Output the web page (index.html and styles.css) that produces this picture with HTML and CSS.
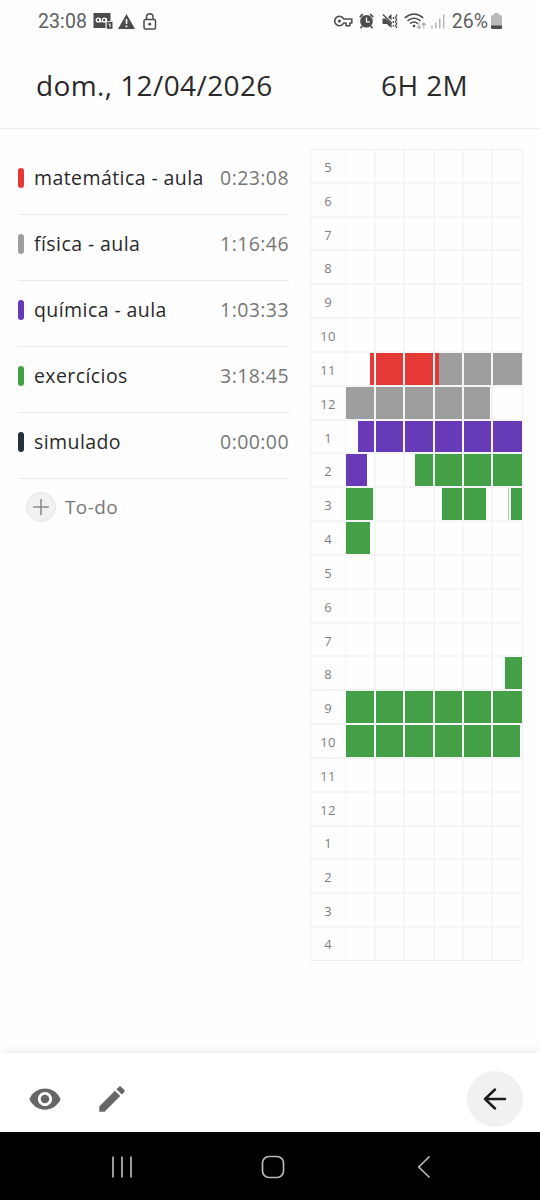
FILE: index.html
```html
<!DOCTYPE html>
<html lang="pt-BR">
<head>
    <meta charset="UTF-8">
    <meta name="viewport" content="width=device-width, initial-scale=1.0">
    <title>Planner</title>
    <link rel="stylesheet" href="styles.css">
</head>
<body>
    <div class="status-bar">
        <div class="status-left">
            <span class="clock">23:08</span>
            <svg class="icon-voicemail" width="20" height="16" viewBox="0 0 20 16">
                <rect x="0.5" y="0" width="17" height="15" fill="#4c4c4c"/>
                <g fill="none" stroke="#fff" stroke-width="1.4">
                    <circle cx="5.2" cy="7" r="1.9"/>
                    <circle cx="11.3" cy="7" r="1.9"/>
                    <path d="M7.1 5V8.5H9.400M13.200 5V8"/>
                </g>
                <path d="M12.500 16V8H20V16Z" fill="#fff"/>
                <rect x="13.700" y="8.800" width="5.800" height="7" fill="#4c4c4c"/>
                <path d="M15.600 11H17V14" fill="none" stroke="#fff"/>
            </svg>
            <svg class="icon-warning" width="17" height="15" viewBox="0 0 17 15">
                <path d="M8.500 0L17 15H0Z" fill="#4c4c4c"/>
                <path d="M8.500 5V10M8.500 11.500V13.300" stroke="#fff" stroke-width="1.700"/>
            </svg>
            <svg class="icon-lock" width="14" height="17" viewBox="0 0 14 17">
                <g fill="none" stroke="#4c4c4c" stroke-width="1.500">
                    <rect x="1" y="6.500" width="11.500" height="9.500" rx="1.500"/>
                    <path d="M3.500 6.500V4a3.250 3.250 0 0 1 6.500 0V6.500"/>
                </g>
                <circle cx="6.750" cy="11.200" r="1.400" fill="#4c4c4c"/>
            </svg>
        </div>
        <div class="status-right">
            <svg class="icon-key" width="19" height="12" viewBox="0 0 19 12">
                <path d="M9.700 4A4.700 4.700 0 1 0 9.700 8H12V10.700H15.800V8H17.800V4Z" fill="none" stroke="#4c4c4c" stroke-width="1.600" stroke-linejoin="round"/>
                <circle cx="5.400" cy="6" r="1.500" fill="#4c4c4c"/>
            </svg>
            <svg class="icon-alarm" width="15" height="16" viewBox="0 0 15 16">
                <circle cx="7.500" cy="8.300" r="6.300" fill="#4c4c4c"/>
                <path d="M0.800 4.200L3.800 1.200M14.200 4.200L11.200 1.200M3.300 13L1.500 15.200M11.700 13L13.500 15.200" stroke="#4c4c4c" stroke-width="1.700"/>
                <path d="M7.500 4.500V8.800H10.800" fill="none" stroke="#fff" stroke-width="1.300"/>
            </svg>
            <svg class="icon-mute" width="16" height="16" viewBox="0 0 16 16">
                <path d="M0.500 5.500H3.500L9.500 11V15L4.800 11H0.500ZM6 4L9.500 1V7.500Z" fill="#4c4c4c"/>
                <path d="M1 1.500L10 10.500" stroke="#4c4c4c" stroke-width="1.500"/>
                <path d="M11.500 4V6M11.500 8V10M11.500 12V13.500M14.500 1.500V3.500M13.700 3.500V5.500M14.500 5.500V7.500M13.700 7.500V9.500M14.500 9.500V11.500M13.700 11.500V13.500M14.500 13.500V15" stroke="#4c4c4c" stroke-width="1.400"/>
            </svg>
            <svg class="icon-wifi" width="23" height="17" viewBox="0 0 23 17">
                <g fill="none" stroke="#4c4c4c" stroke-width="1.500">
                    <path d="M0.800 4.800Q10 -2.800 19.200 4.800"/>
                    <path d="M3.500 7.900Q10 2.600 16.500 7.900"/>
                    <path d="M6.200 10.600Q10 7.500 13.800 10.600"/>
                </g>
                <circle cx="10" cy="13" r="1.300" fill="#4c4c4c"/>
                <path d="M15 9.500V15.500M13 13.500L15 15.500L17 13.500M19.800 15.500V10M17.800 12L19.800 10L21.800 12" fill="none" stroke="#aaa" stroke-width="1.100"/>
            </svg>
            <svg class="icon-signal" width="14" height="15" viewBox="0 0 14 15">
                <path d="M1 11.500V14.500M4.900 8.500V14.500M8.800 4.500V14.500M12.700 0.500V14.500" stroke="#b5b5b5" stroke-width="1.500"/>
            </svg>
            <span class="battery-text">26%</span>
            <svg class="icon-battery" width="11" height="16" viewBox="0 0 11 16">
                <path d="M3 0H8V2H9.500Q11 2 11 3.500V14.500Q11 16 9.500 16H1.500Q0 16 0 14.500V3.500Q0 2 1.500 2H3Z" fill="#b9b9b9"/>
                <path d="M0 12.500H11V14.500Q11 16 9.500 16H1.500Q0 16 0 14.500Z" fill="#4c4c4c"/>
            </svg>
        </div>
    </div>

    <header class="header">
        <div class="date">dom., 12/04/2026</div>
        <div class="total">6H 2M</div>
    </header>

    <main class="content">
        <div class="tasks">
            <div class="task">
                <span class="tag red"></span>
                <span class="name">matemática - aula</span>
                <span class="time">0:23:08</span>
            </div>
            <div class="task">
                <span class="tag gray"></span>
                <span class="name">física - aula</span>
                <span class="time">1:16:46</span>
            </div>
            <div class="task">
                <span class="tag purple"></span>
                <span class="name">química - aula</span>
                <span class="time">1:03:33</span>
            </div>
            <div class="task">
                <span class="tag green"></span>
                <span class="name">exercícios</span>
                <span class="time">3:18:45</span>
            </div>
            <div class="task">
                <span class="tag dark"></span>
                <span class="name">simulado</span>
                <span class="time">0:00:00</span>
            </div>
            <div class="todo">
                <span class="add">
                    <svg width="18" height="18" viewBox="0 0 18 18">
                        <path d="M9 1V17M1 9H17" stroke="#8c8c8c" stroke-width="1.600"/>
                    </svg>
                </span>
                <span class="todo-text">To-do</span>
            </div>
        </div>
        <div class="timetable" id="timetable"></div>
    </main>

    <footer class="toolbar">
        <svg class="icon-eye" width="34" height="34" viewBox="0 0 24 24">
            <path fill="#666" d="M12 4.500C7 4.500 2.730 7.610 1 12c1.730 4.390 6 7.500 11 7.500s9.270-3.110 11-7.500c-1.730-4.390-6-7.500-11-7.500zM12 17c-2.760 0-5-2.240-5-5s2.240-5 5-5 5 2.240 5 5-2.240 5-5 5zm0-8c-1.660 0-3 1.340-3 3s1.340 3 3 3 3-1.340 3-3-1.340-3-3-3z"/>
        </svg>
        <svg class="icon-pencil" width="34" height="34" viewBox="0 0 24 24">
            <path fill="#666" d="M3 17.250V21h3.750L17.810 9.940l-3.750-3.750L3 17.250zM20.710 7.040a1 1 0 0 0 0-1.410l-2.340-2.340a1 1 0 0 0-1.410 0l-1.830 1.830 3.750 3.750 1.830-1.830z"/>
        </svg>
        <button class="back" aria-label="Voltar">
            <svg width="24" height="24" viewBox="0 0 24 24">
                <path d="M22 12H2M12 2.500L2 12L12 21.500" fill="none" stroke="#1c1c1e" stroke-width="2.500" stroke-linecap="round" stroke-linejoin="round"/>
            </svg>
        </button>
    </footer>

    <nav class="nav-bar">
        <svg class="nav-recents" width="22" height="22" viewBox="0 0 22 22">
            <path d="M2 0.500V21.500M11 0.500V21.500M20 0.500V21.500" stroke="#b8b8b8" stroke-width="1.700"/>
        </svg>
        <svg class="nav-home" width="24" height="24" viewBox="0 0 24 24">
            <rect x="1.500" y="1.500" width="21" height="21" rx="6.500" fill="none" stroke="#b8b8b8" stroke-width="1.700"/>
        </svg>
        <svg class="nav-back" width="14" height="24" viewBox="0 0 14 24">
            <path d="M12.500 1.500L1.800 12L12.500 22.500" fill="none" stroke="#b8b8b8" stroke-width="1.700"/>
        </svg>
    </nav>

    <script src="script.js"></script>
</body>
</html>
```

FILE: styles.css
```css
* {
    box-sizing: border-box;
}
body {
    margin: 0;
    width: 540px;
    height: 1200px;
    display: flex;
    flex-direction: column;
    overflow: hidden;
    background: #fefefe;
    color: #29292b;
    font-family: "Open Sans", sans-serif;
}
svg {
    display: block;
    flex: none;
}

/* Status bar */
.status-bar {
    height: 42px;
    padding: 0 38px;
    display: flex;
    justify-content: space-between;
    align-items: center;
    font-family: Roboto, sans-serif;
    font-size: 19.5px;
    color: #606060;
}
.status-left,
.status-right {
    display: flex;
    align-items: center;
}
.clock {
    letter-spacing: 0.1px;
}
.icon-voicemail {
    margin-left: 6px;
}
.icon-warning {
    margin-left: 5px;
}
.icon-lock {
    margin-left: 8px;
}
.icon-alarm {
    margin-left: 6px;
}
.icon-mute {
    margin-left: 8px;
}
.icon-wifi {
    margin-left: 6px;
}
.icon-signal {
    margin-left: 4px;
}
.battery-text {
    margin-left: 7px;
}
.icon-battery {
    margin-left: 3px;
}

/* Date and total */
.header {
    height: 87px;
    display: flex;
    align-items: center;
    padding-left: 36px;
    border-bottom: 1px solid #ededed;
    font-size: 28px;
    letter-spacing: 0.4px;
}
.date {
    width: 345px;
}

/* Task list */
.content {
    flex: 1;
    display: flex;
    padding: 16px 17px 0 18px;
    align-items: flex-start;
}
.tasks {
    width: 271px;
    margin-top: 4px;
    margin-right: 21px;
}
.task {
    height: 66px;
    padding-bottom: 7px;
    display: flex;
    align-items: center;
    border-bottom: 1px solid #ebebeb;
    font-size: 19.5px;
    letter-spacing: 0.42px;
}
.tag {
    width: 6px;
    height: 20px;
    margin-right: 10px;
    border-radius: 3px;
}
.name {
    flex: 1;
    padding-bottom: 1px;
    white-space: nowrap;
}
.time {
    padding-bottom: 1px;
    color: #777;
}
.todo {
    height: 56px;
    display: flex;
    align-items: center;
    padding-left: 8px;
    font-size: 19px;
    letter-spacing: 0.4px;
    color: #777;
}
.add {
    width: 30px;
    height: 30px;
    margin-right: 9px;
    display: flex;
    align-items: center;
    justify-content: center;
    background: #f1f1f1;
    border: 1px solid #e6e6e6;
    border-radius: 50%;
}
.red {
    background: #e53935;
}
.gray {
    background: #9e9e9e;
}
.purple {
    background: #673ab7;
}
.green {
    background: #43a047;
}
.light-green {
    background: #a3d0a5;
}
.dark {
    background: #263238;
}

/* Timetable */
.timetable {
    width: 213px;
    height: 812px;
    margin-top: 4px;
    display: flex;
    flex-direction: column;
    border: 1px solid #f1f1f5;
}
.row {
    flex: 1;
    display: flex;
    border-bottom: 2px solid #f5f5f8;
}
.row:last-child {
    border-bottom: none;
}
.hour {
    width: 34px;
    padding-top: 2px;
    display: flex;
    align-items: center;
    justify-content: center;
    font-size: 13px;
    letter-spacing: 0.3px;
    color: #808080;
}
.row:last-child .hour {
    padding-top: 0;
}
.track {
    flex: 1;
    position: relative;
    display: grid;
    grid-template-columns: repeat(5, 29.2px) 1fr;
}
.cell {
    position: relative;
    z-index: 1;
    border-left: 2px solid #f5f5f8;
}
.bar + .cell,
.cell:first-child {
    border-left-width: 1px;
}
.bar {
    position: absolute;
    top: 0;
    bottom: 0;
}

/* Bottom toolbar */
.toolbar {
    height: 79px;
    display: flex;
    align-items: center;
    padding: 12px 17px 0 28px;
    background: #fff;
    box-shadow: 0 0 10px rgba(0, 0, 0, 0.1);
}
.icon-pencil {
    margin-left: 33px;
}
.back {
    width: 56px;
    height: 56px;
    margin-left: auto;
    padding: 0;
    display: flex;
    align-items: center;
    justify-content: center;
    background: #f1f1f1;
    border: none;
    border-radius: 50%;
}

/* Navigation bar */
.nav-bar {
    height: 68px;
    display: flex;
    align-items: center;
    padding: 1px 0 0 111px;
    background: #000;
}
.nav-home {
    margin-left: 128px;
}
.nav-back {
    margin-left: 132px;
}
```

FILE: script.js
```js
const hours = [5, 6, 7, 8, 9, 10, 11, 12, 1, 2, 3, 4, 5, 6, 7, 8, 9, 10, 11, 12, 1, 2, 3, 4];

// row, start minute, end minute, color
const sessions = [
    [6, 8.6, 31.8, 'red'],
    [6, 31.8, 60, 'gray'],
    [7, 0, 49.2, 'gray'],
    [8, 4.5, 60, 'purple'],
    [9, 0, 7.5, 'purple'],
    [9, 23.8, 60, 'green'],
    [10, 0, 9.5, 'green'],
    [10, 32.9, 47.7, 'green'],
    [10, 55.3, 55.5, 'light-green'],
    [10, 56.3, 60, 'green'],
    [11, 0, 8.5, 'green'],
    [15, 54.3, 60, 'green'],
    [16, 0, 60, 'green'],
    [17, 0, 59.3, 'green']
];

const timetable = document.getElementById('timetable');

hours.forEach((hour, i) => {
    const bars = sessions
        .filter(s => s[0] === i)
        .map(s => `<div class="bar ${s[3]}" style="left: ${s[1] / 60 * 100}%; width: ${(s[2] - s[1]) / 60 * 100}%"></div>`)
        .join('');
    const row = document.createElement('div');
    row.className = 'row';
    row.innerHTML = `<div class="hour">${hour}</div><div class="track">${bars}${'<div class="cell"></div>'.repeat(6)}</div>`;
    timetable.appendChild(row);
});
```
